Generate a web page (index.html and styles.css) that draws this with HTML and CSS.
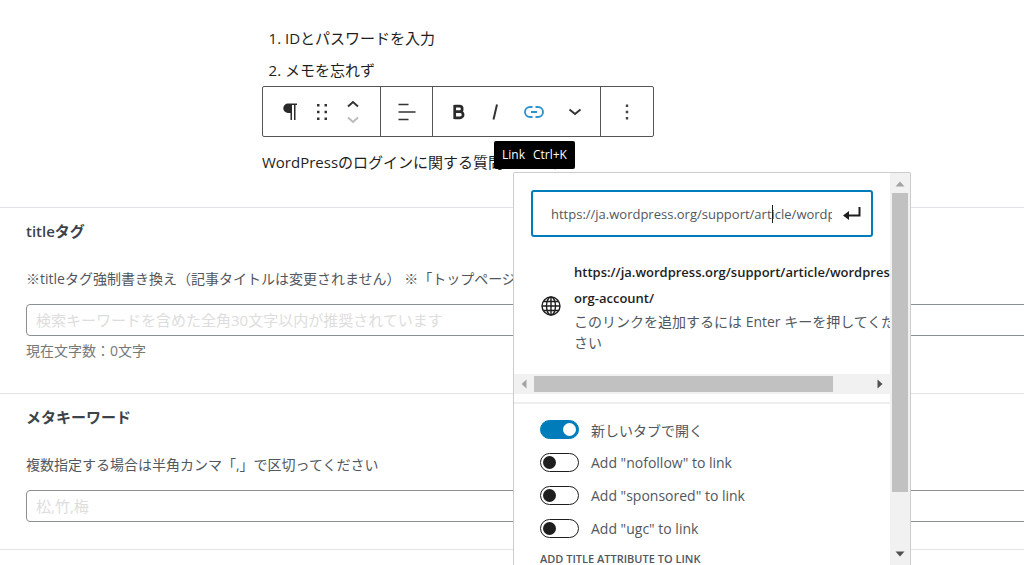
FILE: index.html
```html
<!DOCTYPE html>
<html lang="ja">
<head>
<meta charset="utf-8">
<meta name="viewport" content="width=device-width, initial-scale=1">
<title>投稿の編集</title>
<link rel="stylesheet" href="styles.css">
</head>
<body>
<main class="page">
  <section class="editor">
    <ol class="steps">
      <li>IDとパスワードを入力</li>
      <li>メモを忘れず</li>
    </ol>
    <div class="toolbar" role="toolbar" aria-label="ブロックツール">
      <div class="group group-block">
        <button class="tool" aria-label="段落"><svg width="16" height="20" viewBox="0 0 16 20"><path d="M6 1.500H15V3H13.500V18H12V3H10V18H8.500V11H6A4.750 4.750 0 0 1 6 1.500Z" fill="#2a2a2a"/></svg></button>
        <button class="tool" aria-label="ドラッグ"><svg width="12" height="18" viewBox="0 0 12 18" fill="#333"><path d="M1 1h2.500v2.500H1zM8.500 1H11v2.500H8.500zM1 7.700h2.500v2.500H1zM8.500 7.700H11v2.500H8.500zM1 14.400h2.500v2.500H1zM8.500 14.400H11v2.500H8.500z"/></svg></button>
        <div class="movers">
          <button aria-label="上に移動"><svg width="14" height="8" viewBox="0 0 14 8"><path d="M2 6.500 7 2l5 4.500" fill="none" stroke="#333" stroke-width="1.900"/></svg></button>
          <button aria-label="下に移動" disabled><svg width="14" height="8" viewBox="0 0 14 8"><path d="M2 1.500 7 6l5-4.500" fill="none" stroke="#bbb" stroke-width="1.900"/></svg></button>
        </div>
      </div>
      <div class="group group-align">
        <button class="tool" aria-label="配置"><svg width="20" height="20" viewBox="0 0 20 20"><path d="M1.500 2.500h10M1.500 10h17M1.500 17.500h10" stroke="#333" stroke-width="1.700"/></svg></button>
      </div>
      <div class="group group-format">
        <button class="tool" aria-label="太字"><svg width="14" height="18" viewBox="0 0 14 18"><path d="M2.500 3.200H7.500a2.700 2.700 0 0 1 0 5.400H2.500M2.500 8.600H8a3.100 3.100 0 0 1 0 6.200H2.500M2.700 2v14" fill="none" stroke="#2a2a2a" stroke-width="2.700"/></svg></button>
        <button class="tool" aria-label="イタリック"><svg width="10" height="18" viewBox="0 0 10 18"><path d="M7 1.500 3.500 16.500" stroke="#333" stroke-width="2"/></svg></button>
        <button class="tool" aria-label="リンク"><svg width="20" height="14" viewBox="0 0 20 14"><path d="M8.500 2H6a5 5 0 0 0 0 10h2.500M11.500 2H14a5 5 0 0 1 0 10h-2.500M7 7h6" fill="none" stroke="#2f93cc" stroke-width="1.900"/></svg></button>
        <button class="tool" aria-label="さらに表示"><svg width="14" height="8" viewBox="0 0 14 8"><path d="M1.500 1.500 7 6l5.500-4.500" fill="none" stroke="#333" stroke-width="1.900"/></svg></button>
      </div>
      <div class="group group-more">
        <button class="tool" aria-label="オプション"><svg width="4" height="18" viewBox="0 0 4 18" fill="#444"><path d="M.8 1.500h2.400v2.400H.8zM.8 7.800h2.400v2.400H.8zM.8 14.100h2.400v2.400H.8z"/></svg></button>
      </div>
      <div class="tooltip" role="tooltip"><span>Link</span><span>Ctrl+K</span></div>
    </div>
    <p class="paragraph">WordPressのログインに関する質問は、こち</p>
  </section>

  <section class="field">
    <label class="heading" for="title-tag">titleタグ</label>
    <p class="note">※titleタグ強制書き換え（記事タイトルは変更されません） ※「トップページ</p>
    <input class="box" id="title-tag" type="text" placeholder="検索キーワードを含めた全角30文字以内が推奨されています">
    <p class="count">現在文字数：0文字</p>
  </section>
  <section class="field">
    <label class="heading" for="meta-keywords">メタキーワード</label>
    <p class="note">複数指定する場合は半角カンマ「,」で区切ってください</p>
    <input class="box" id="meta-keywords" type="text" placeholder="松,竹,梅">
  </section>
  <section class="field"></section>

  <aside class="popover">
    <div class="panel">
      <div class="search">
        <input class="url" type="text" aria-label="URL" value="https://ja.wordpress.org/support/article/wordpress-org-account/">
        <span class="caret"></span>
        <button class="submit" aria-label="送信"><svg width="20" height="16" viewBox="0 0 20 16"><path d="M17.500 1v8.500H5" fill="none" stroke="#1e1e1e" stroke-width="2"/><path d="M1 9.500 7 5v9z" fill="#1e1e1e"/></svg></button>
      </div>
      <div class="result">
        <svg class="globe" width="20" height="20" viewBox="0 0 20 20" fill="none" stroke="#1e1e1e" stroke-width="1.400"><circle cx="10" cy="10" r="9"/><ellipse cx="10" cy="10" rx="4.500" ry="9"/><path d="M10 1v18M1 10h18M2.500 5.500h15M2.500 14.500h15"/></svg>
        <div class="result-text">
          <strong>https://ja.wordpress.org/support/article/wordpress-<br>org-account/</strong>
          <span>このリンクを追加するには Enter キーを押してくだ<br>さい</span>
        </div>
      </div>
      <div class="hbar">
        <svg width="6" height="10" viewBox="0 0 6 10"><path d="M5.500.5v9L.5 5z" fill="#a3a3a3"/></svg>
        <div class="htrack"><div class="hthumb"></div></div>
        <svg width="6" height="10" viewBox="0 0 6 10"><path d="M.5.5v9l5-4.500z" fill="#505050"/></svg>
      </div>
      <div class="options">
        <label class="option"><input class="switch" type="checkbox" checked>新しいタブで開く</label>
        <label class="option"><input class="switch" type="checkbox">Add "nofollow" to link</label>
        <label class="option"><input class="switch" type="checkbox">Add "sponsored" to link</label>
        <label class="option"><input class="switch" type="checkbox">Add "ugc" to link</label>
        <div class="subhead">ADD TITLE ATTRIBUTE TO LINK</div>
      </div>
    </div>
    <div class="vbar">
      <svg width="10" height="6" viewBox="0 0 10 6"><path d="M.5 5.500h9L5 .5z" fill="#a3a3a3"/></svg>
      <div class="vtrack"><div class="vthumb"></div></div>
      <svg width="10" height="6" viewBox="0 0 10 6"><path d="M.5.5h9L5 5.500z" fill="#505050"/></svg>
    </div>
  </aside>
</main>
</body>
</html>
```
FILE: styles.css
```css
* { box-sizing: border-box; }

body {
  margin: 0;
  background: #fff;
  color: #1e1e1e;
  font-family: "Open Sans", "Noto Sans CJK JP", sans-serif;
  font-size: 14px;
}

p { margin: 0; }

button {
  display: flex;
  padding: 0;
  border: 0;
  background: none;
}

.page {
  position: relative;
  height: 100vh;
  overflow: hidden;
}

/* Editor canvas */
.editor {
  display: flex;
  flex-direction: column;
  align-items: flex-start;
  padding: 22px 0 0 262px;
  height: 207px;
  font-size: 15px;
}

.steps {
  margin: 0;
  padding-left: 23px;
  line-height: 32px;
}

.toolbar {
  position: relative;
  display: flex;
  height: 51px;
  border: 1px solid #555;
  border-radius: 2px;
  background: #fff;
}

.group {
  display: flex;
  align-items: center;
  justify-content: center;
}

.group + .group { border-left: 1px solid #555; }
.group-block { width: 117px; gap: 18px; padding-right: 2px; }
.group-align { width: 52px; }
.group-format { width: 168px; gap: 24px; }
.group-more { width: 53px; }

.movers {
  display: flex;
  flex-direction: column;
  gap: 8px;
}

.tooltip {
  position: absolute;
  top: 54px;
  left: 231px;
  z-index: 3;
  display: flex;
  gap: 8px;
  padding: 0 8px;
  border-radius: 2px;
  background: #000;
  color: #fff;
  font-size: 12px;
  line-height: 28px;
  white-space: nowrap;
}

.paragraph { line-height: 50px; }

/* Meta fields */
.field {
  display: flex;
  flex-direction: column;
  align-items: flex-start;
  padding: 11px 0 27px 26px;
  border-top: 1px solid #e2e4e7;
  color: #50575e;
}

.heading {
  color: #3c434a;
  font-size: 15px;
  font-weight: 600;
  line-height: 24px;
}

.note {
  margin-top: 24px;
  line-height: 24px;
  white-space: nowrap;
}

.box {
  width: calc(100% + 20px);
  height: 32px;
  margin-top: 13px;
  padding: 0 9px;
  border: 1px solid #8c8f94;
  border-radius: 4px;
  background: #fff;
  font: inherit;
  font-size: 15px;
}

.box::placeholder { color: #ddd; opacity: 1; }

.count {
  margin-top: 3px;
  margin-bottom: 3px;
  color: #777;
  line-height: 24px;
}

/* Link popover */
.popover {
  position: absolute;
  top: 172px;
  bottom: 0;
  left: 513px;
  z-index: 2;
  display: flex;
  width: 398px;
  border: 1px solid #ccc;
  border-bottom: 0;
  border-radius: 2px 2px 0 0;
  background: #fff;
  overflow: hidden;
}

.panel {
  flex: 1;
  min-width: 0;
  overflow: hidden;
}

.search {
  position: relative;
  display: flex;
  align-items: center;
  gap: 10px;
  height: 47px;
  margin: 17px 17px 0;
  padding: 0 9px 0 18px;
  border: 2px solid #007cba;
  border-radius: 3px;
}

.url {
  flex: 1;
  min-width: 0;
  height: 24px;
  padding: 0;
  border: 0;
  outline: 0;
  background: none;
  color: #50575e;
  font: inherit;
  font-size: 13px;
}

.caret {
  position: absolute;
  top: 13px;
  left: 239px;
  width: 1px;
  height: 18px;
  background: #1e1e1e;
}

.result {
  display: flex;
  align-items: center;
  gap: 12px;
  padding: 22px 0 21px 27px;
}

.globe { flex: none; }

.result-text {
  display: flex;
  flex-direction: column;
  padding-left: 1px;
  white-space: nowrap;
}

.result-text strong {
  font-size: 13px;
  font-weight: 600;
  line-height: 26px;
}

.result-text span {
  color: #50575e;
  line-height: 21px;
}

.hbar {
  display: flex;
  align-items: center;
  gap: 7px;
  height: 20px;
  padding: 0 7px;
  background: #f1f1f1;
}

.htrack { flex: 1; }

.hthumb {
  width: 89%;
  height: 16px;
  background: #c1c1c1;
}

.options {
  display: flex;
  flex-direction: column;
  margin-top: 8px;
  padding: 9px 26px;
  border-top: 2px solid #eee;
  color: #50575e;
}

.option {
  display: flex;
  align-items: center;
  gap: 12px;
  height: 33px;
}

.switch {
  appearance: none;
  display: flex;
  align-items: center;
  width: 39px;
  height: 19px;
  margin: 0;
  padding: 0 2px;
  border: 1px solid #1e1e1e;
  border-radius: 10px;
  background: #fff;
}

.switch::before {
  width: 13px;
  height: 13px;
  border-radius: 50%;
  background: #1e1e1e;
  content: "";
}

.switch:checked {
  justify-content: flex-end;
  border-color: #007cba;
  background: #007cba;
}

.switch:checked::before { background: #fff; }

.subhead {
  font-size: 11px;
  font-weight: 600;
  line-height: 28px;
}

.vbar {
  display: flex;
  flex-direction: column;
  align-items: center;
  gap: 6px;
  width: 20px;
  padding: 8px 0;
  background: #f1f1f1;
}

.vtrack { flex: 1; }

.vthumb {
  width: 16px;
  height: 85%;
  background: #c1c1c1;
}
```
